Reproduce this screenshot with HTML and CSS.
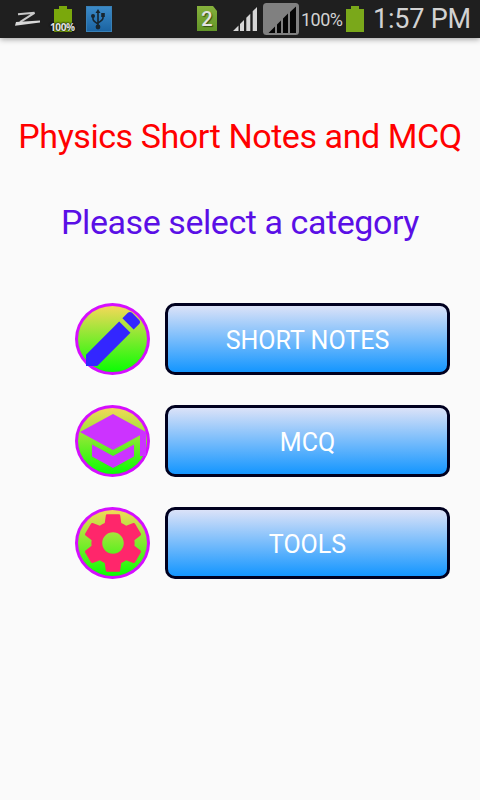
FILE: index.html
```html
<!DOCTYPE html>
<html lang="en">
<head>
    <meta charset="UTF-8" />
    <meta name="viewport" content="width=device-width, initial-scale=1.0"/>
    <title>Physics Short Notes and MCQ</title>
    <link rel="stylesheet" href="styles.css">
</head>
<body>

    <!-- Status bar -->
    <header class="status-bar">
        <svg class="logo-z" width="26" height="16" viewBox="0 0 26 16">
            <path d="M3 3.2L19.5 1.8L5 11.2" fill="none" stroke="#c8c8c8" stroke-width="2"/>
            <path d="M1 11L25 9.5V11.5L0 14.8Z" fill="#d8d8d8"/>
        </svg>
        <div class="battery-level">
            <svg width="18" height="26" viewBox="0 0 18 26">
                <path d="M0 3H5V0H13V3H18V26H0Z" fill="#7aa80c"/>
            </svg>
            <span class="battery-label">100%</span>
        </div>
        <svg class="usb" width="26" height="26" viewBox="0 0 26 26">
            <defs>
                <linearGradient id="usb-bg" x1="0" y1="0" x2="0" y2="1">
                    <stop offset="0" stop-color="#3c8bc9"/>
                    <stop offset="1" stop-color="#1a63a1"/>
                </linearGradient>
            </defs>
            <rect x=".5" y=".5" width="25" height="25" fill="url(#usb-bg)" stroke="#3980b5"/>
            <path d="M12 22V5M7 10V13Q7 15 12 18M17 9V12Q17 14 12 17" fill="none" stroke="#172630" stroke-width="1.6"/>
            <path d="M12 3L14.5 7H9.5Z" fill="#172630"/>
            <circle cx="12" cy="21" r="2.4" fill="#172630"/>
            <circle cx="7" cy="10" r="2" fill="#172630"/>
            <rect x="15.2" y="7" width="3.6" height="4" fill="#172630"/>
        </svg>
        <div class="sim">2</div>
        <svg class="signal" width="24" height="24" viewBox="0 0 24 24">
            <path d="M0 24L5.5 18.5V24ZM7 24V17L11 13V24ZM13.3 24V10.7L17.3 6.7V24ZM19.7 24V4.3L24 0V24Z" fill="#d6d6d6"/>
        </svg>
        <svg class="signal-box" width="36" height="32" viewBox="0 0 36 32">
            <rect width="36" height="32" rx="3.5" fill="#808080"/>
            <path d="M5.5 30L12 23.5V30ZM14 30V21.5L18 17.5V30ZM20 30V15.5L25 10.5V30ZM27 30V9L33 3.5V30Z" fill="#050505"/>
        </svg>
        <span class="percent">100%</span>
        <svg class="battery" width="18" height="26" viewBox="0 0 18 26">
            <path d="M0 3H5V0H13V3H18V26H0Z" fill="#7aa81a"/>
        </svg>
        <span class="clock">1:57 PM</span>
    </header>

    <main>
        <h1>Physics Short Notes and MCQ</h1>
        <h2>Please select a category</h2>

        <div class="menu">
            <div class="menu-row">
                <div class="icon">
                    <svg viewBox="0 0 24 24" fill="#3326ff">
                        <path d="M3 17.25V21h3.75L17.81 9.94l-3.75-3.75L3 17.25zM20.71 7.04c.39-.39.39-1.02 0-1.41l-2.34-2.34c-.39-.39-1.02-.39-1.41 0l-1.83 1.83 3.75 3.75 1.83-1.83z"/>
                    </svg>
                </div>
                <button>SHORT NOTES</button>
            </div>
            <div class="menu-row">
                <div class="icon">
                    <svg viewBox="0 0 24 24" fill="#cc33ff">
                        <path d="M5 13.18v4L12 21l7-3.82v-4L12 17l-7-3.82zM12 3L1 9l11 6 9-4.91V17h2V9L12 3z"/>
                    </svg>
                </div>
                <button>MCQ</button>
            </div>
            <div class="menu-row">
                <div class="icon">
                    <svg viewBox="0 0 24 24" fill="#ff266b">
                        <path d="M19.14 12.94c.04-.3.06-.61.06-.94 0-.32-.02-.64-.07-.94l2.03-1.58c.18-.14.23-.41.12-.61l-1.92-3.32c-.12-.22-.37-.29-.59-.22l-2.39.96c-.5-.38-1.03-.7-1.62-.94l-.36-2.54c-.04-.24-.24-.41-.48-.41h-3.84c-.24 0-.43.17-.47.41l-.36 2.54c-.59.24-1.13.57-1.62.94l-2.39-.96c-.22-.08-.47 0-.59.22L2.74 8.87c-.12.21-.08.47.12.61l2.03 1.58c-.05.3-.09.63-.09.94s.02.64.07.94l-2.03 1.58c-.18.14-.23.41-.12.61l1.92 3.32c.12.22.37.29.59.22l2.39-.96c.5.38 1.03.7 1.62.94l.36 2.54c.05.24.24.41.48.41h3.84c.24 0 .44-.17.47-.41l.36-2.54c.59-.24 1.13-.56 1.62-.94l2.39.96c.22.08.47 0 .59-.22l1.92-3.32c.12-.22.07-.47-.12-.61l-2.01-1.58zM12 15.6c-1.98 0-3.6-1.62-3.6-3.6s1.62-3.6 3.6-3.6 3.6 1.62 3.6 3.6-1.62 3.6-3.6 3.6z"/>
                    </svg>
                </div>
                <button>TOOLS</button>
            </div>
        </div>
    </main>

</body>
</html>
```

FILE: styles.css
```css
* {
    box-sizing: border-box;
}

body {
    margin: 0;
    height: 100vh;
    overflow: hidden;
    background: #fafafa;
    font-family: Roboto, sans-serif;
}

/* Dark system bar */
.status-bar {
    display: flex;
    align-items: flex-start;
    height: 38px;
    padding-left: 15px;
    background: #1f1f1f;
    color: #d2d2d2;
    box-shadow: 0 1px 6px rgba(0, 0, 0, 0.4);
    white-space: nowrap;
}

.status-bar svg {
    display: block;
    flex: none;
}

.logo-z {
    margin-top: 11px;
}

.battery-level {
    position: relative;
    width: 18px;
    margin: 6px 0 0 13px;
}

/* Charge text lies over the battery */
.battery-label {
    position: absolute;
    left: -4px;
    top: 15px;
    font: bold 10px/12px "Open Sans", sans-serif;
    letter-spacing: -0.4px;
    color: #e4e4e4;
    text-shadow: 0 0 2px #000, 0 0 2px #000;
}

.usb {
    margin: 6px 0 0 14px;
}

.sim {
    width: 20px;
    height: 25px;
    margin: 6px 0 0 85px;
    background: linear-gradient(#86b13c, #629528);
    clip-path: polygon(0 0, 80% 0, 100% 20%, 100% 100%, 0 100%);
    font-size: 20px;
    font-weight: 500;
    line-height: 27px;
    text-align: center;
    color: #e2e2e2;
    text-shadow: 1px 1px 1px #345015;
}

.signal {
    margin: 7px 0 0 16px;
}

.signal-box {
    margin: 3px 0 0 6px;
}

.percent {
    width: 43px;
    margin: 9px 0 0 2px;
    font-size: 18px;
    line-height: 22px;
    letter-spacing: -0.5px;
}

.battery {
    margin: 6px 0 0 2px;
}

.clock {
    margin: 2px 0 0 9px;
    font-size: 27px;
    line-height: 34px;
    letter-spacing: -0.2px;
}

h1,
h2 {
    margin: 0;
    font-size: 34px;
    font-weight: 400;
    line-height: 40px;
    letter-spacing: -0.43px;
    text-align: center;
    white-space: nowrap;
}

h1 {
    padding-top: 78px;
    color: #ff0000;
}

h2 {
    margin-top: 46px;
    color: #5a0fe6;
}

/* Category list */
.menu {
    display: flex;
    flex-direction: column;
    gap: 30px;
    margin: 61px 30px 0 75px;
}

.menu-row {
    display: flex;
    gap: 15px;
    height: 72px;
}

.icon {
    display: flex;
    justify-content: center;
    align-items: center;
    width: 75px;
    height: 72px;
    border: 3px solid #d50fff;
    border-radius: 50%;
    background: linear-gradient(#ffd65c, #00ff00) border-box;
}

.icon svg {
    flex: none;
    width: 72px;
    height: 72px;
}

button {
    flex: 1;
    padding: 3px 0 0;
    border: 3px solid #00001f;
    border-radius: 10px;
    background: linear-gradient(#dbe2f8, #1496ff);
    color: #fff;
    font-family: inherit;
    font-size: 25px;
}
```
